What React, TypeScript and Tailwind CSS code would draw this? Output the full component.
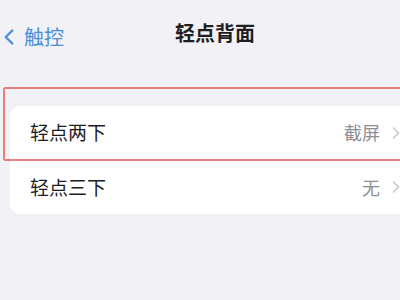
import { ChevronLeft, ChevronRight } from "lucide-react";

const font = { fontFamily: '"Noto Sans CJK SC", "Noto Sans", sans-serif' };

function Row({
  label,
  value,
  last,
}: {
  label: string;
  value: string;
  last?: boolean;
}) {
  return (
    <div className="flex h-[54px] items-center pl-[20px]">
      <div
        className={`flex h-full flex-1 items-center pr-[4px] ${
          last ? "" : "border-b border-[#ececf0]"
        }`}
      >
        <span className="flex-1 text-[19px] text-[#1c1c1e]">{label}</span>
        <span className="text-[18px] text-[#8e8e93]">{value}</span>
        <ChevronRight className="ml-[6px] h-[20px] w-[20px] text-[#c4c4c8]" strokeWidth={1.6} />
      </div>
    </div>
  );
}

export default function App() {
  return (
    <div
      className="relative h-[300px] w-[400px] overflow-hidden bg-[#f1f1f6]"
      style={font}
    >
      {/* Nav bar */}
      <div className="relative flex h-[70px] items-start pt-[22px]">
        <div className="flex items-center text-[#4a8fdc]">
          <ChevronLeft className="ml-[-4px] h-[26px] w-[26px]" strokeWidth={2.2} />
          <span className="ml-[2px] text-[20px]">触控</span>
        </div>
        <div className="absolute left-[175px] top-[18px] text-[20px] font-bold text-[#1f1f1f]">
          轻点背面
        </div>
      </div>

      {/* Card */}
      <div className="ml-[10px] mt-[36px] w-[400px] overflow-hidden rounded-[10px] bg-white">
        <Row label="轻点两下" value="截屏" />
        <Row label="轻点三下" value="无" last />
      </div>

      {/* Highlight annotation */}
      <div className="absolute left-[3px] top-[87px] h-[74px] w-[420px] rounded-[2px] border-2 border-[#e98080]" />
    </div>
  );
}
